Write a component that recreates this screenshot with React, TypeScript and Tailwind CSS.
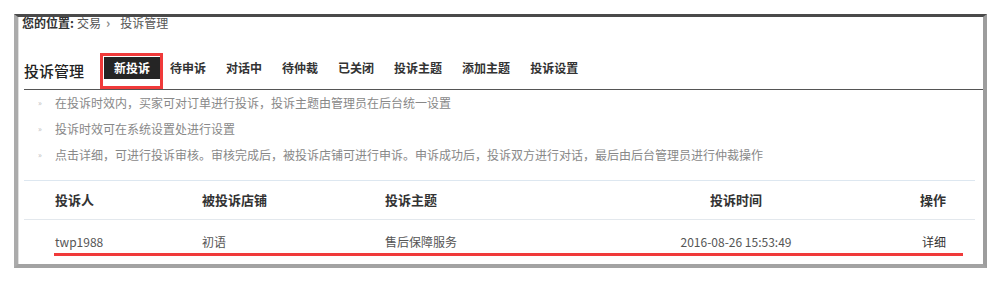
import React from "react";

const tabs = ["待申诉", "对话中", "待仲裁", "已关闭", "投诉主题", "添加主题", "投诉设置"];
const tips = [
  "在投诉时效内，买家可对订单进行投诉，投诉主题由管理员在后台统一设置",
  "投诉时效可在系统设置处进行设置",
  "点击详细，可进行投诉审核。审核完成后，被投诉店铺可进行申诉。申诉成功后，投诉双方进行对话，最后由后台管理员进行仲裁操作",
];

export default function App() {
  return (
    <div className="relative w-[1002px] h-[282px] bg-white font-['Noto_Sans_CJK_SC',sans-serif] text-[12px] text-[#555]">
      <div className="absolute left-0 top-0 w-full h-full pt-[14px] pl-[14px]">
        <div className="w-[973px] h-[254px] bg-white border-t-[3px] border-t-[#4a4a4a] border-l-[4px] border-l-[#ababab] border-r-[4px] border-r-[#9d9d9d] border-b-[4px] border-b-[#a3a3a3] shadow-[inset_1px_0_0_#e0e0e0]">
          {/* breadcrumb */}
          <div className="pl-[4px] h-[12px] leading-[12px] flex items-center whitespace-nowrap">
            <span className="font-bold text-[#333]">您的位置:</span>
            <span className="ml-[3px] text-[#555]">交易</span>
            <span className="ml-[5px] mr-[10px] text-[#888] text-[13px] font-bold">›</span>
            <span className="text-[#555]">投诉管理</span>
          </div>

          {/* title & tabs */}
          <div className="mt-[24px] ml-[6px] h-[37px] border-b border-b-[#555] flex items-start">
            <div className="text-[15px] leading-[36px] text-[#222] font-medium whitespace-nowrap">投诉管理</div>
            <div className="ml-[20px] mt-[4px] flex items-center h-[22px]">
              <div className="relative h-[22px] px-[10px] bg-[#252525] text-white font-bold leading-[22px] whitespace-nowrap">
                新投诉
                <div className="absolute left-[-4px] top-[-4px] right-[-3px] bottom-[-10px] border-[3px] border-[#f03a3a]" />
              </div>
              {tabs.map((t) => (
                <div key={t} className="px-[10px] leading-[22px] font-bold text-[#333] whitespace-nowrap">
                  {t}
                </div>
              ))}
            </div>
          </div>

          {/* tips */}
          <div className="pl-[20px]">
            {tips.map((t) => (
              <div key={t} className="flex items-center h-[26px] whitespace-nowrap">
                <span className="w-[17px] text-[8px] text-[#bbb] leading-[26px]">»</span>
                <span className="text-[#888] leading-[26px]">{t}</span>
              </div>
            ))}
          </div>

          {/* table */}
          <div className="mt-[12px] ml-[6px] mr-[8px] border-t border-t-[#dde7f0]">
            <div className="flex h-[39px] items-center border-b border-b-[#e3e8ed] text-[13px] font-bold text-[#333] whitespace-nowrap">
              <div className="w-[178px] pl-[31px]">投诉人</div>
              <div className="w-[183px]">被投诉店铺</div>
              <div className="w-[230px]">投诉主题</div>
              <div className="w-[242px] text-center">投诉时间</div>
              <div className="flex-1 text-right pr-[29px]">操作</div>
            </div>
            <div className="flex h-[44px] items-center whitespace-nowrap text-[#555]">
              <div className="w-[178px] pl-[31px]">twp1988</div>
              <div className="w-[183px]">初语</div>
              <div className="w-[230px]">售后保障服务</div>
              <div className="w-[242px] text-center">2016-08-26 15:53:49</div>
              <div className="flex-1 text-right pr-[29px] text-[#333]">详细</div>
            </div>
          </div>
        </div>
      </div>
      {/* red underline annotation */}
      <div className="absolute left-[54px] top-[253px] w-[909px] h-[3px] bg-[#f03a3a]" />
    </div>
  );
}
